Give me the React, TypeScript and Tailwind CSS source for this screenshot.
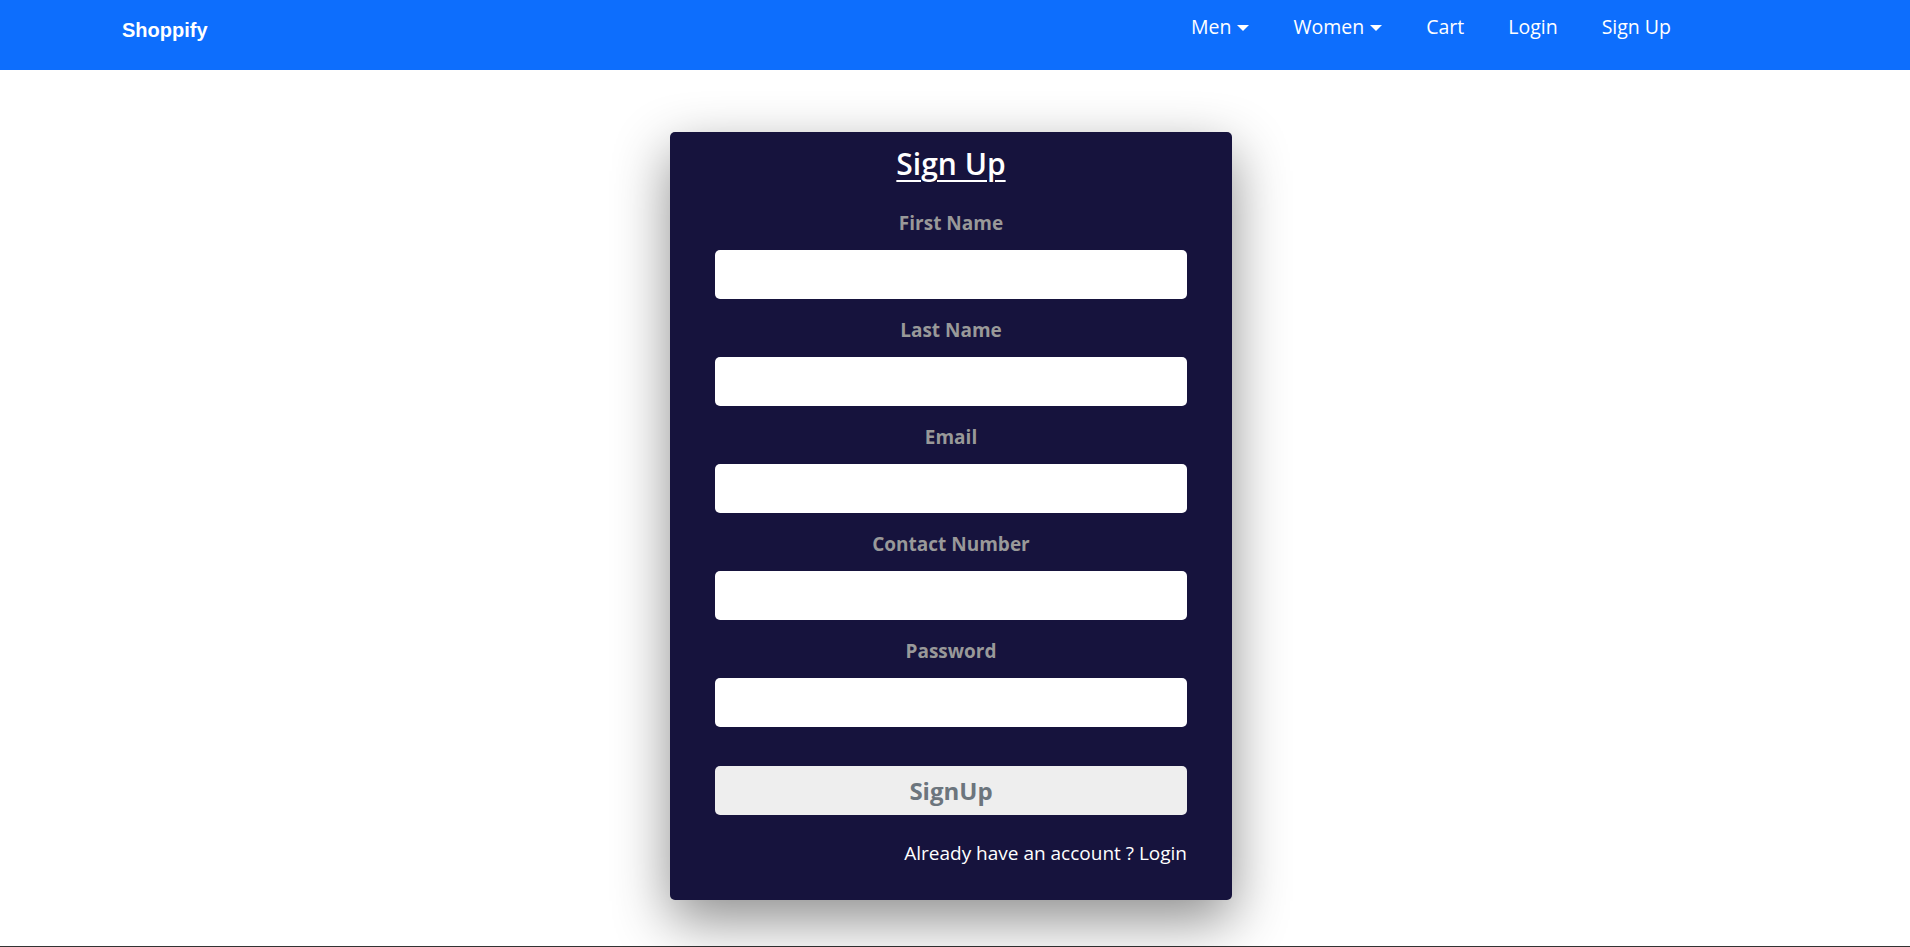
import { useState } from 'react'

const NAV_ITEMS = [
  { label: 'Men', caret: true },
  { label: 'Women', caret: true },
  { label: 'Cart', caret: false },
  { label: 'Login', caret: false },
  { label: 'Sign Up', caret: false },
]

const FIELDS = [
  { name: 'firstName', label: 'First Name', type: 'text' },
  { name: 'lastName', label: 'Last Name', type: 'text' },
  { name: 'email', label: 'Email', type: 'email' },
  { name: 'contact', label: 'Contact Number', type: 'tel' },
  { name: 'password', label: 'Password', type: 'password' },
]

const UI_FONT = "font-['Open_Sans','Noto_Sans',sans-serif]"

function Navbar() {
  return (
    <nav className="h-[70px] bg-[#0d6efd] flex items-start pl-[122px] pr-[217px]">
      <a href="#" className="mt-[15px] leading-[30px] text-[20px] font-bold text-white font-['Liberation_Sans',Arial,sans-serif]">
        Shoppify
      </a>
      <ul className={`ml-auto flex pt-[12px] ${UI_FONT}`}>
        {NAV_ITEMS.map((item) => (
          <li key={item.label}>
            <a href="#" className="flex items-center px-[22px] leading-[30px] text-[19.5px] text-white">
              {item.label}
              {item.caret && (
                <span className="ml-[6px] mt-[1px] w-0 h-0 border-x-[6px] border-x-transparent border-t-[6px] border-t-white" />
              )}
            </a>
          </li>
        ))}
      </ul>
    </nav>
  )
}

export default function App() {
  const [form, setForm] = useState<Record<string, string>>({})

  return (
    <div className="min-h-screen bg-white">
      <Navbar />

      <main className="h-[876px] flex justify-center pr-[8px] pt-[62px]">
        <form
          onSubmit={(e) => e.preventDefault()}
          className={`w-[562px] h-[768px] bg-[#16133d] rounded-[5px] px-[45px] pt-[13px] shadow-[0_20px_55px_rgba(0,0,0,0.45)] ${UI_FONT}`}
        >
          <h2 className="text-center text-[30px] leading-[38px] font-semibold text-white underline underline-offset-[5px] decoration-2">
            Sign Up
          </h2>

          <div className="mt-[25px] flex flex-col">
            {FIELDS.map((f) => (
              <div key={f.name} className="flex flex-col mb-[16px]">
                <label htmlFor={f.name} className="text-center text-[19px] leading-[30px] font-bold text-[#999999]">
                  {f.label}
                </label>
                <input
                  id={f.name}
                  type={f.type}
                  value={form[f.name] ?? ''}
                  onChange={(e) => setForm((p) => ({ ...p, [f.name]: e.target.value }))}
                  className="mt-[12px] h-[49px] w-full rounded-[5px] bg-white px-3 text-[18px] text-gray-800 outline-none"
                />
              </div>
            ))}
          </div>

          <button
            type="submit"
            className="mt-[23px] h-[49px] w-full rounded-[5px] bg-[#eeeeee] text-[24px] font-bold text-[#6c757d]"
          >
            SignUp
          </button>

          <p className="mt-[23px] text-right text-[19px] leading-[30px] text-white">
            Already have an account ? <a href="#">Login</a>
          </p>
        </form>
      </main>

      <footer className="h-[60px] bg-[#333333]" />
    </div>
  )
}
